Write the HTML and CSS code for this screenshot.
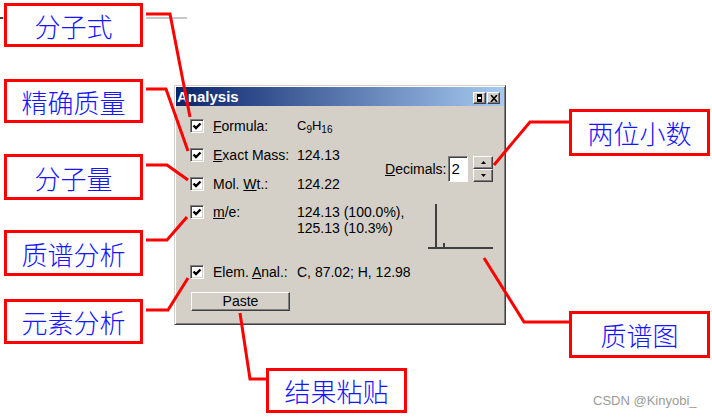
FILE: index.html
```html
<!doctype html>
<html>
<head>
    <meta charset="UTF-8">
    <title>Analysis 窗口说明</title>
    <link rel="stylesheet" href="styles.css">
</head>
<body>
<div class="canvas">
    <div class="dialog">
        <div class="titlebar">
            <span class="title">Analysis</span>
            <div class="tbtns">
                <span class="tbtn"><svg width="7" height="8" viewBox="0 0 7 8"><rect x="1" y="0" width="5" height="8" fill="#000"/><rect x="2" y="3" width="3" height="2" fill="#fff"/></svg></span>
                <span class="tbtn"><svg width="8" height="7" viewBox="0 0 8 7"><path d="M1 0 L7 7 M7 0 L1 7" stroke="#000" stroke-width="1.6"/></svg></span>
            </div>
        </div>
        <div class="body">
            <!-- Formula -->
            <span class="cb r1"><svg width="12" height="12" viewBox="0 0 12 12"><polyline points="2.5,5.5 5,8 9.5,3.5" fill="none" stroke="#000" stroke-width="2.4"/></svg></span>
            <span class="lbl r1"><u>F</u>ormula:</span>
            <span class="val r1 formula">C<sub>9</sub>H<sub>16</sub></span>
            <!-- Exact mass -->
            <span class="cb r2"><svg width="12" height="12" viewBox="0 0 12 12"><polyline points="2.5,5.5 5,8 9.5,3.5" fill="none" stroke="#000" stroke-width="2.4"/></svg></span>
            <span class="lbl r2"><u>E</u>xact Mass:</span>
            <span class="val r2">124.13</span>
            <!-- Mol wt -->
            <span class="cb r3"><svg width="12" height="12" viewBox="0 0 12 12"><polyline points="2.5,5.5 5,8 9.5,3.5" fill="none" stroke="#000" stroke-width="2.4"/></svg></span>
            <span class="lbl r3">Mol. <u>W</u>t.:</span>
            <span class="val r3">124.22</span>
            <!-- decimals -->
            <div class="decimals">
                <span class="declbl"><u>D</u>ecimals:</span>
                <span class="decbox">2</span>
                <span class="spin">
                    <span class="sbtn"><svg width="5" height="3" viewBox="0 0 5 3"><path d="M0 3 L2.5 0 L5 3 Z" fill="#000"/></svg></span>
                    <span class="sbtn"><svg width="5" height="3" viewBox="0 0 5 3"><path d="M0 0 L2.5 3 L5 0 Z" fill="#000"/></svg></span>
                </span>
            </div>
            <!-- m/e -->
            <span class="cb r4 top"><svg width="12" height="12" viewBox="0 0 12 12"><polyline points="2.5,5.5 5,8 9.5,3.5" fill="none" stroke="#000" stroke-width="2.4"/></svg></span>
            <span class="lbl r4 top2"><u>m</u>/e:</span>
            <span class="val r4 top2">124.13 (100.0%),<br>125.13 (10.3%)</span>
            <svg class="graph" width="65" height="46" viewBox="0 0 65 46">
                <path d="M8 0 V44 M0 44 H65 M16 39 V44" stroke="#404040" stroke-width="2" fill="none"/>
            </svg>
            <!-- elem -->
            <span class="cb r5"><svg width="12" height="12" viewBox="0 0 12 12"><polyline points="2.5,5.5 5,8 9.5,3.5" fill="none" stroke="#000" stroke-width="2.4"/></svg></span>
            <span class="lbl r5">Elem. <u>A</u>nal.:</span>
            <span class="val r5">C, 87.02; H, 12.98</span>
            <span class="paste">Paste</span>
        </div>
    </div>

    <div class="callout" style="left:4px;top:3px;height:44px">分子式</div>
    <div class="callout" style="left:4px;top:79px;height:44px">精确质量</div>
    <div class="callout" style="left:4px;top:154px;height:46px">分子量</div>
    <div class="callout" style="left:4px;top:230px;height:46px">质谱分析</div>
    <div class="callout" style="left:4px;top:299px;height:45px">元素分析</div>
    <div class="callout wide" style="left:569px;top:109px;height:47px">两位小数</div>
    <div class="callout wide" style="left:569px;top:311px;height:47px">质谱图</div>
    <div class="callout wide" style="left:266px;top:368px;height:45px">结果粘贴</div>

    <svg class="wires" width="712" height="417" viewBox="0 0 712 417">
        <path d="M0 18 H4 M146 18 H187" stroke="#c8c8c8" stroke-width="2"/>
        <path d="M0 18 H3" stroke="#404040" stroke-width="2"/>
        <g fill="none" stroke="#ff0000" stroke-width="3">
            <polyline points="146,14 170,14 190,117"/>
            <polyline points="146,89 166,89 188,151"/>
            <polyline points="146,165 167,165 188,180"/>
            <polyline points="146,240 167,240 187,217"/>
            <polyline points="146,310 168,310 188,278"/>
            <polyline points="240,313 250,379 266,379"/>
            <polyline points="569,122 530,122 494,165"/>
            <polyline points="569,322 524,322 484,258"/>
        </g>
    </svg>

    <div class="mark">CSDN @Kinyobi_</div>
</div>
</body>
</html>
```

FILE: styles.css
```css
body{margin:0;background:#fff;font-family:"Liberation Sans",Arial,sans-serif}
.canvas{position:relative;width:712px;height:417px;overflow:hidden}

/* 对话框 */
.dialog{position:absolute;left:174px;top:85px;width:332px;box-sizing:border-box;background:#d4d0c8;
    border:1px solid;border-color:#d4d0c8 #404040 #404040 #d4d0c8;
    box-shadow:inset 1px 1px #fff,inset -1px -1px #808080;padding:1px}
.titlebar{height:19px;display:flex;align-items:center;justify-content:space-between;padding:0 4px 0 1px;
    background:linear-gradient(to right,#0a246a,#a6caf0)}
.title{color:#fff;font-weight:bold;font-size:15px;letter-spacing:0}
.tbtns{display:flex;gap:1px;margin-top:3px}
.tbtn{width:13px;height:12px;box-sizing:border-box;background:#d4d0c8;display:flex;align-items:center;justify-content:center;
    border:1px solid;border-color:#fff #404040 #404040 #fff;box-shadow:inset -1px -1px #808080}

.body{display:grid;grid-template-columns:23px 84px minmax(0,1fr) 108px;
    grid-template-rows:28px 29px 29px 60px 28px auto;padding:6px 11px 12px 14px;font-size:14px;color:#000}
.body span{white-space:nowrap}
.r1{grid-row:1}.r2{grid-row:2}.r3{grid-row:3}.r4{grid-row:4}.r5{grid-row:5}
.cb,.lbl,.val{align-self:center;line-height:16px}
.cb{grid-column:1;width:14px;height:14px;box-sizing:border-box;background:#fff;border:1px solid;
    border-color:#808080 #fff #fff #808080;box-shadow:inset 1px 1px #404040,inset -1px -1px #d4d0c8}
.cb svg{display:block}
.lbl{grid-column:2}
.val{grid-column:3}
.top{align-self:start;margin-top:7px}
.top2{align-self:start;margin-top:6px}
.formula{font-size:13px}
.formula sub{font-size:10px;vertical-align:-3px;line-height:0}
.r5.val{grid-column:3/5}

.decimals{grid-column:4;grid-row:2/4;align-self:center;display:flex;align-items:center}
.declbl{margin-right:2px}
.decbox{width:20px;height:26px;box-sizing:border-box;background:#fff;border:1px solid;
    border-color:#808080 #fff #fff #808080;box-shadow:inset 1px 1px #404040;padding:3px 0 0 2px;font-size:15px;line-height:18px}
.spin{display:flex;flex-direction:column;margin-left:5px}
.sbtn{width:20px;height:13px;box-sizing:border-box;background:#d4d0c8;display:flex;align-items:center;justify-content:center;
    border:1px solid;border-color:#fff #404040 #404040 #fff;box-shadow:inset -1px -1px #808080}
.graph{grid-column:4;grid-row:4;justify-self:end;align-self:start;margin-top:6px}

.paste{grid-column:1/4;grid-row:6;justify-self:start;margin:6px 0 0 1px;width:99px;height:19px;box-sizing:border-box;
    border:1px solid;border-color:#fff #404040 #404040 #fff;box-shadow:inset -1px -1px #808080;
    text-align:center;line-height:16px}

/* 标注框 */
.callout{position:absolute;width:139px;box-sizing:border-box;border:3px solid #ff0000;background:#fff;
    display:flex;align-items:center;justify-content:center;color:#1515ff;font-size:26px;
    font-family:"Noto Sans CJK SC",sans-serif;font-weight:300;letter-spacing:0}
.callout.wide{width:141px}
.wires{position:absolute;left:0;top:0;pointer-events:none}
.mark{position:absolute;left:593px;top:393px;font-size:13px;color:#9a9a9a;line-height:16px}
```
